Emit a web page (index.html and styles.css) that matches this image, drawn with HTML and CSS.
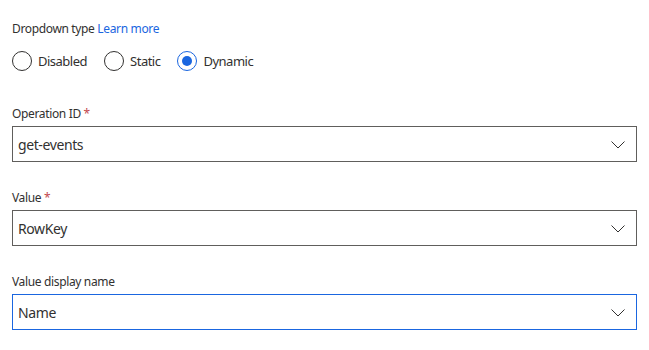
FILE: index.html
```html
<!DOCTYPE html>
<html lang="en">
<head>
  <meta charset="UTF-8">
  <title>Dropdown settings</title>
  <link rel="stylesheet" href="styles.css">
</head>
<body>

  <div class="panel">
    <div class="tipo">
      <span>Dropdown type</span>
      <a href="#">Learn more</a>
    </div>

    <div class="radios">
      <label class="radio"><span class="circulo"></span>Disabled</label>
      <label class="radio"><span class="circulo"></span>Static</label>
      <label class="radio activo"><span class="circulo"></span>Dynamic</label>
    </div>

    <div class="campo">
      <div class="etiqueta">Operation ID <span class="req">*</span></div>
      <div class="caja">
        <span>get-events</span>
        <svg class="flecha" width="14" height="8" viewBox="0 0 14 8"><path d="M0.5 0.5 L7 7 L13.5 0.5" fill="none" stroke="#323130" stroke-width="1"/></svg>
      </div>
    </div>

    <div class="campo">
      <div class="etiqueta">Value <span class="req">*</span></div>
      <div class="caja">
        <span>RowKey</span>
        <svg class="flecha" width="14" height="8" viewBox="0 0 14 8"><path d="M0.5 0.5 L7 7 L13.5 0.5" fill="none" stroke="#323130" stroke-width="1"/></svg>
      </div>
    </div>

    <div class="campo">
      <div class="etiqueta">Value display name</div>
      <div class="caja foco">
        <span>Name</span>
        <svg class="flecha" width="14" height="8" viewBox="0 0 14 8"><path d="M0.5 0.5 L7 7 L13.5 0.5" fill="none" stroke="#323130" stroke-width="1"/></svg>
      </div>
    </div>
  </div>

</body>
</html>
```

FILE: styles.css
```css
body {
  margin: 0;
  background: #ffffff;
  color: #323130;
  font-family: 'Segoe UI', 'Noto Sans', sans-serif;
}

.panel {
  width: 625px;
  padding: 20px 0 0 12px;
}

.tipo {
  font-size: 12px;
  line-height: 17px;
  letter-spacing: -0.35px;
}

.tipo a {
  color: #1a66e0;
  text-decoration: none;
}

.radios {
  display: flex;
  gap: 17px;
  margin-top: 14px;
  height: 20px;
}

.radio {
  display: flex;
  align-items: center;
  gap: 6px;
  font-size: 13px;
  letter-spacing: -0.5px;
}

.circulo {
  width: 18px;
  height: 18px;
  border: 1px solid #323130;
  border-radius: 50%;
  display: flex;
  align-items: center;
  justify-content: center;
}

.activo .circulo {
  border-color: #1a66e0;
}

.activo .circulo::after {
  content: "";
  width: 10px;
  height: 10px;
  border-radius: 50%;
  background: #1a66e0;
}

.campo {
  margin-top: 34px;
}

.campo + .campo {
  margin-top: 27px;
}

.etiqueta {
  font-size: 12px;
  line-height: 17px;
  margin-bottom: 4px;
  letter-spacing: -0.35px;
}

.req {
  color: #c2474d;
}

.caja {
  height: 34px;
  border: 1px solid #605e5c;
  display: flex;
  align-items: center;
  justify-content: space-between;
  padding: 0 11px 0 5px;
  font-size: 14px;
  letter-spacing: -0.4px;
}

.caja.foco {
  border-color: #1a66e0;
}

.flecha {
  margin-top: 2px;
}
```
